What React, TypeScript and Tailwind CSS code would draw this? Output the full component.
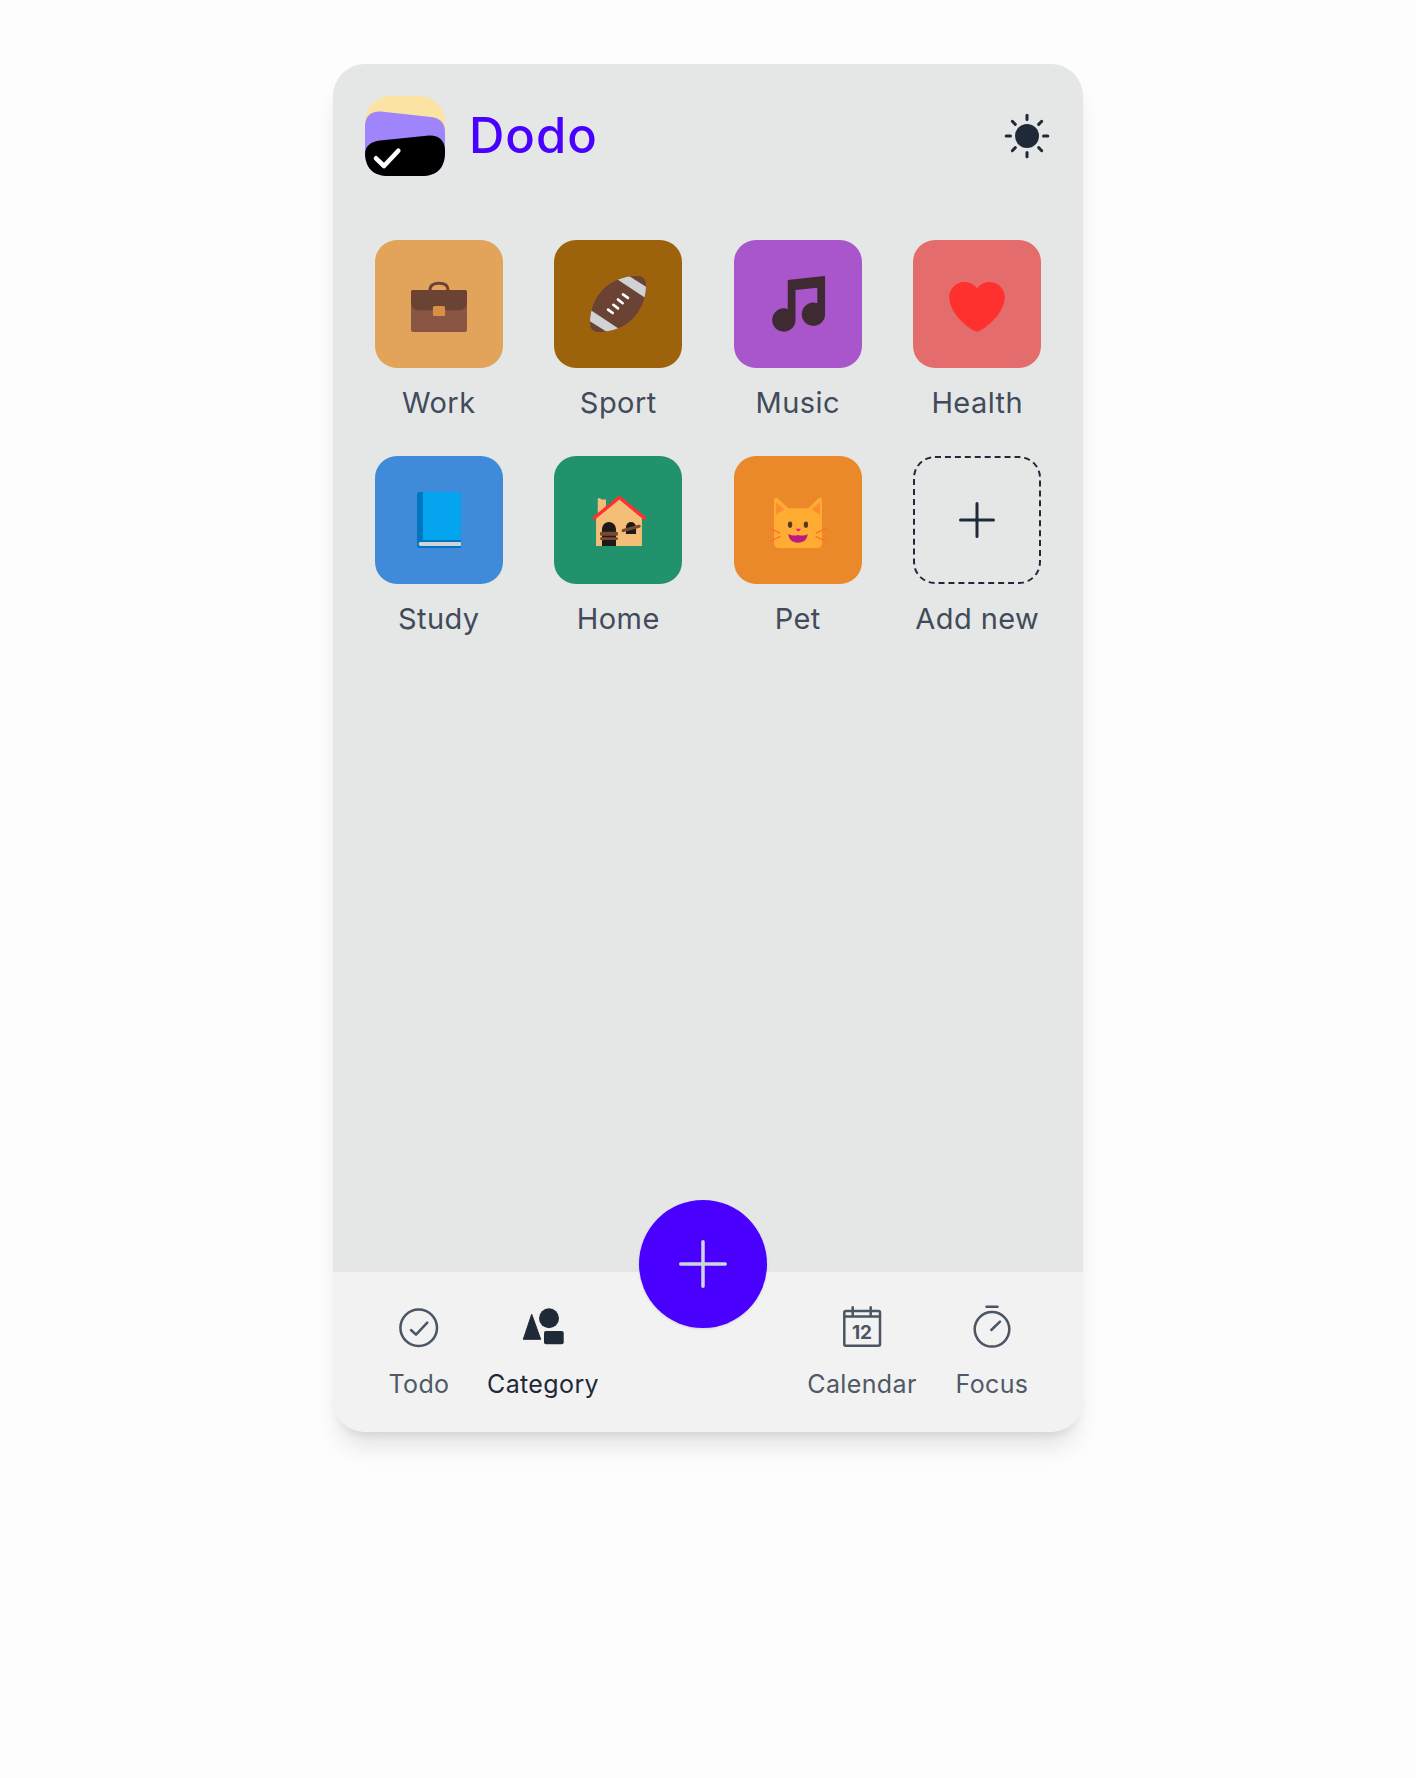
const font = { fontFamily: "Inter, 'Noto Sans', sans-serif" };

function Logo() {
  return (
    <svg width="80" height="80" viewBox="0 0 80 80" className="shrink-0">
      <rect width="80" height="80" rx="26" fill="#FBE3A3" />
      <path d="M0 30 C0 20 6 15 16 15.5 L66 21 C75 22 80 27 80 36 V56 C80 72 72 80 56 80 H24 C8 80 0 72 0 56Z" fill="#A084FB" />
      <path d="M0 58 C0 50 6 45.5 15 44.5 L64 39.5 C74 39 80 45 80 54 V56 C80 72 72 80 56 80 H24 C8 80 0 72 0 56Z" fill="#000" />
      <path d="M11 62.3 L19 70 L33.3 54.7" fill="none" stroke="#fff" strokeWidth="4.6" strokeLinecap="round" strokeLinejoin="round" />
    </svg>
  );
}

function Sun() {
  const rays = [0, 45, 90, 135, 180, 225, 270, 315];
  return (
    <svg width="56" height="56" viewBox="0 0 56 56">
      <circle cx="28" cy="28" r="12" fill="#1F2937" />
      {rays.map((a) => (
        <line key={a} x1="28" y1="11.5" x2="28" y2="7.2" stroke="#1F2937" strokeWidth="3" strokeLinecap="round" transform={`rotate(${a} 28 28)`} />
      ))}
    </svg>
  );
}

function Briefcase() {
  return (
    <svg width="56" height="56" viewBox="0 0 36 36">
      <path d="M12.2 9 C12.2 5.8 14.8 4.6 18 4.6 C21.2 4.6 23.8 5.8 23.8 9" fill="none" stroke="#6A4335" strokeWidth="1.9" />
      <path d="M0 10.5 A1.5 1.5 0 0 1 1.5 9 H34.5 A1.5 1.5 0 0 1 36 10.5 V34.5 A1.5 1.5 0 0 1 34.5 36 H1.5 A1.5 1.5 0 0 1 0 34.5Z" fill="#8A5543" />
      <path d="M0 10.5 A1.5 1.5 0 0 1 1.5 9 H34.5 A1.5 1.5 0 0 1 36 10.5 V17 C36 20 34 22 31 22 H5 C2 22 0 20 0 17Z" fill="#6A4335" />
      <rect x="14.1" y="19.3" width="7.8" height="6.4" rx="1" fill="#D99045" />
    </svg>
  );
}

function Football() {
  const ball = "M30 0 C34 0 36 2 36 6 C36 14 33 22 27.5 27.5 C22 33 14 36 6 36 C2 36 0 34 0 30 C0 22 3 14 8.5 8.5 C14 3 22 0 30 0Z";
  return (
    <svg width="56" height="56" viewBox="0 0 36 36">
      <defs>
        <clipPath id="ball">
          <path d={ball} />
        </clipPath>
      </defs>
      <path d={ball} fill="#6A4335" />
      <g clipPath="url(#ball)" fill="#D0D2D3">
        <polygon points="16.5,1.5 23.5,-1 37,7.5 35.4,14" />
        <polygon points="19.5,34.5 12.5,37 -1,28.5 0.6,22" />
      </g>
      <g stroke="#fff" strokeWidth="1.7" strokeLinecap="round">
        <line x1="11.6" y1="21.6" x2="14.6" y2="23.8" />
        <line x1="15" y1="18.5" x2="18" y2="20.8" />
        <line x1="18" y1="15.1" x2="21" y2="17.5" />
        <line x1="21.2" y1="11.8" x2="24.4" y2="14.1" />
      </g>
    </svg>
  );
}

function MusicNote() {
  return (
    <svg width="56" height="56" viewBox="0 0 36 36">
      <path d="M11.4 2.6 L34.9 0 Q35.4 0 35.4 .5 V24.6 A7.5 7.5 0 1 1 30.4 17.53 V7.5 L16.4 9 V28.3 A7.5 7.5 0 1 1 11.4 21.23Z" fill="#3F2A32" />
    </svg>
  );
}

function Heart() {
  return (
    <svg width="56" height="56" viewBox="0 0 36 36">
      <path transform="translate(0 1.9)" d="M35.885 11.833c0-5.45-4.418-9.868-9.867-9.868-3.308 0-6.227 1.633-8.018 4.129-1.791-2.496-4.71-4.129-8.017-4.129-5.45 0-9.868 4.417-9.868 9.868 0 .772.098 1.52.266 2.241C1.751 22.587 11.216 31.568 18 34.034c6.783-2.466 16.249-11.447 17.617-19.959.17-.721.268-1.469.268-2.242z" fill="#FF312E" />
    </svg>
  );
}

function Book() {
  return (
    <svg width="56" height="56" viewBox="0 0 36 36">
      <path d="M3.9 1.5 A1.5 1.5 0 0 1 5.4 0 H30.6 A1.5 1.5 0 0 1 32.1 1.5 V36 H5.4 A1.5 1.5 0 0 1 3.9 34.5Z" fill="#0075BF" />
      <path d="M7.7 0 H30.6 A1.5 1.5 0 0 1 32.1 1.5 V30.9 H7.7Z" fill="#05A4EE" />
      <path d="M6.2 32.1 H32.1 V34.7 H6.2 A1.3 1.3 0 0 1 6.2 32.1Z" fill="#D1D4D6" />
    </svg>
  );
}

function House() {
  return (
    <svg width="56" height="56" viewBox="0 0 36 36">
      <path d="M5 4 L6.8 4 L7 4.8 H10.3 V12 L5 16Z" fill="#F4BE79" />
      <path d="M3.9 16 L18.9 4.5 L33.4 16 V34.7 H3.9Z" fill="#F4BE79" />
      <path d="M7.7 34.7 V23.8 A4.5 4.5 0 0 1 16.7 23.8 V34.7Z" fill="#1E1A1A" />
      <path d="M23.1 27 V22.5 A3.2 3.2 0 0 1 29.6 22.5 V27Z" fill="#1E1A1A" />
      <rect x="6.4" y="25.6" width="11.6" height="2.6" rx="1" fill="#7A4A30" />
      <rect x="6.4" y="29.1" width="11.6" height="1.7" rx=".8" fill="#7A4A30" />
      <line x1="21.3" y1="24.8" x2="31.6" y2="22" stroke="#7A4A30" strokeWidth="2" strokeLinecap="round" />
      <path d="M2.6 16.8 L18.9 3.6 L35 16.8" fill="none" stroke="#FF3030" strokeWidth="2.1" strokeLinecap="round" strokeLinejoin="round" />
    </svg>
  );
}

function Cat() {
  return (
    <svg width="56" height="56" viewBox="0 0 36 36">
      <path d="M2.6 5 C2.6 3.6 4 3.3 5 4.2 L11.8 10.5 H24.6 L31 4.2 C32 3.3 33.4 3.6 33.4 5 V33 A3 3 0 0 1 30.4 36 H5.6 A3 3 0 0 1 2.6 33Z" fill="#FFAC33" />
      <polygon points="3.9,6.6 9.2,11.1 3.9,14.8" fill="#FF8C30" />
      <polygon points="32.1,6.6 26.8,11.1 32.1,14.8" fill="#FF8C30" />
      <ellipse cx="12.9" cy="21" rx="1.4" ry="2" fill="#5A3524" />
      <ellipse cx="23.1" cy="21" rx="1.4" ry="2" fill="#5A3524" />
      <path d="M16.4 23.6 H20 L18.2 25.6Z" fill="#F0148C" />
      <path d="M11.8 27 C14 28 16 28.3 18 27.6 C20 28.3 22.5 28 24.2 27 C24 30.5 21.5 32.6 18 32.6 C14.5 32.6 12 30.5 11.8 27Z" fill="#BB1A82" />
      <g stroke="#FF6F2A" strokeWidth=".8" strokeLinecap="round">
        <line x1=".2" y1="23.4" x2="6.4" y2="26.4" />
        <line x1=".2" y1="31.7" x2="6.4" y2="28.7" />
        <line x1="35.8" y1="23.4" x2="29.6" y2="26.4" />
        <line x1="35.8" y1="31.7" x2="29.6" y2="28.7" />
      </g>
    </svg>
  );
}

function PlusIcon({ size, color, width }: { size: number; color: string; width: number }) {
  return (
    <svg width={size} height={size} viewBox={`0 0 ${size} ${size}`}>
      <path d={`M${size / 2} ${width / 2}V${size - width / 2}M${width / 2} ${size / 2}H${size - width / 2}`} stroke={color} strokeWidth={width} strokeLinecap="round" fill="none" />
    </svg>
  );
}

const categories = [
  { name: "Work", bg: "bg-[#E2A35B]", icon: <Briefcase /> },
  { name: "Sport", bg: "bg-[#9C620C]", icon: <Football /> },
  { name: "Music", bg: "bg-[#A956CD]", icon: <MusicNote /> },
  { name: "Health", bg: "bg-[#E56C6C]", icon: <Heart /> },
  { name: "Study", bg: "bg-[#408BD9]", icon: <Book /> },
  { name: "Home", bg: "bg-[#21926B]", icon: <House /> },
  { name: "Pet", bg: "bg-[#EB882A]", icon: <Cat /> },
];

function CategoryCell({ name, children, className }: { name: string; children: React.ReactNode; className: string }) {
  return (
    <div className="flex flex-col items-center">
      <div className={`w-32 h-32 rounded-[22px] flex items-center justify-center ${className}`}>{children}</div>
      <span className="mt-[17px] -mb-px text-[29px] leading-9 tracking-[0.015em] text-[#414B5A]">{name}</span>
    </div>
  );
}

function NavItem({ label, width, active, children }: { label: string; width: string; active?: boolean; children: React.ReactNode }) {
  return (
    <div className={`flex flex-col items-center ${width}`}>
      {children}
      <span className={`mt-4 text-[25px] leading-8 tracking-[0.015em] whitespace-nowrap ${active ? "text-gray-800" : "text-[#4F5967]"}`}>{label}</span>
    </div>
  );
}

export default function App() {
  return (
    <div className="min-h-screen bg-[#FDFDFD] flex justify-center pt-16" style={font}>
      <div className="w-[750px] h-[1368px] flex flex-col rounded-[32px] bg-[#E5E7E7] shadow-xl">
        <header className="flex items-center justify-between pt-8 pl-8 pr-7">
          <div className="flex items-center gap-6">
            <Logo />
            <h1 className="text-[49px] font-medium leading-none tracking-[0.02em] -mt-0.5 text-[#4A00FF]">Dodo</h1>
          </div>
          <Sun />
        </header>

        <main className="flex-1 grid grid-cols-4 gap-y-9 content-start px-4 mt-16">
          {categories.map((c) => (
            <CategoryCell key={c.name} name={c.name} className={c.bg}>
              {c.icon}
            </CategoryCell>
          ))}
          <CategoryCell name="Add new" className="border-2 border-dashed border-gray-800">
            <PlusIcon size={36} color="#1F2937" width={3} />
          </CategoryCell>
        </main>

        <nav className="relative h-40 shrink-0 rounded-b-[32px] bg-[#F2F2F2] flex justify-between pl-14 pr-[57px] pt-8">
          <div className="flex gap-[38px]">
            <NavItem label="Todo" width="w-[60px]">
              <svg width="48" height="48" viewBox="0 0 48 48" fill="none" stroke="#4B5563" strokeWidth="2.5" strokeLinecap="round" strokeLinejoin="round">
                <circle cx="23.7" cy="23.7" r="18.3" />
                <path d="M16 26 L21 30.7 L32.3 18.7" />
              </svg>
            </NavItem>
            <NavItem label="Category" width="w-[112px]" active>
              <svg width="48" height="48" viewBox="0 0 48 48" fill="#1F2937">
                <path d="M4.3 35.3 L12.7 10.3 L21.7 35.3Z" stroke="#1F2937" strokeWidth="1" strokeLinejoin="round" />
                <circle cx="30" cy="14.3" r="10" />
                <rect x="25" y="27" width="19.7" height="13.3" rx="2" />
              </svg>
            </NavItem>
          </div>

          <button className="absolute -top-[72px] left-[306px] w-32 h-32 rounded-full bg-[#4A00FF] flex items-center justify-center shadow-sm">
            <PlusIcon size={48} color="#D1D5DB" width={3.5} />
          </button>

          <div className="flex gap-[41px]">
            <NavItem label="Calendar" width="w-[110px]">
              <svg width="48" height="48" viewBox="0 0 48 48" fill="none" stroke="#4B5563" strokeWidth="2.5" strokeLinecap="round" strokeLinejoin="round">
                <rect x="6.3" y="7" width="35.7" height="34.7" rx="1.5" />
                <path d="M6.3 12.5H42M14.7 3.3V11.3M32.7 3.3V11.3" />
                <text x="24" y="35" textAnchor="middle" fontSize="19" fontWeight="700" fill="#4B5563" stroke="none">12</text>
              </svg>
            </NavItem>
            <NavItem label="Focus" width="w-[68px]">
              <svg width="48" height="48" viewBox="0 0 48 48" fill="none" stroke="#4B5563" strokeWidth="2.5" strokeLinecap="round">
                <circle cx="24" cy="25.3" r="17.3" />
                <path d="M18.5 2.7H29.5M23.3 26L32 17.7" />
              </svg>
            </NavItem>
          </div>
        </nav>
      </div>
    </div>
  );
}
